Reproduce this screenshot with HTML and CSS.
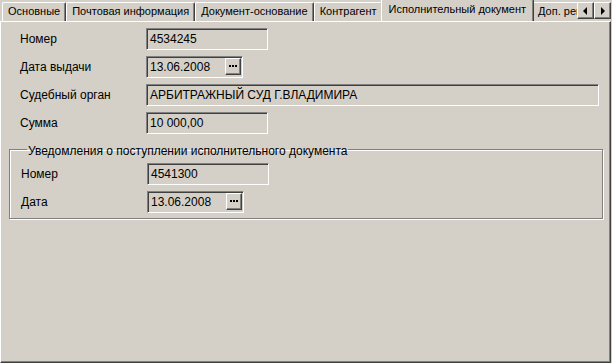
FILE: index.html
```html
<!DOCTYPE html>
<html lang="ru">
<head>
    <meta charset="UTF-8">
    <title>Исполнительный документ</title>
    <link rel="stylesheet" href="styles.css">
</head>
<body>
    <div class="window">
        <div class="tab-strip">
            <div class="tabs">
                <div class="tab">Основные</div>
                <div class="tab">Почтовая информация</div>
                <div class="tab">Документ-основание</div>
                <div class="tab">Контрагент</div>
                <div class="tab active">Исполнительный документ</div>
                <div class="tab">Доп. реквизиты</div>
            </div>
            <div class="scroller">
                <div class="arrow-btn"><span class="tri left"></span></div>
                <div class="arrow-btn"><span class="tri right"></span></div>
            </div>
        </div>

        <div class="panel">
            <div class="form">
                <div class="label">Номер</div>
                <div class="field short">4534245</div>

                <div class="label">Дата выдачи</div>
                <div class="field date">13.06.2008<span class="dots-btn"><i></i><i></i><i></i></span></div>

                <div class="label">Судебный орган</div>
                <div class="field wide">АРБИТРАЖНЫЙ СУД Г.ВЛАДИМИРА</div>

                <div class="label">Сумма</div>
                <div class="field short">10 000,00</div>
            </div>

            <fieldset class="group">
                <legend>Уведомления о поступлении исполнительного документа</legend>
                <div class="form">
                    <div class="label">Номер</div>
                    <div class="field short">4541300</div>

                    <div class="label">Дата</div>
                    <div class="field date">13.06.2008<span class="dots-btn"><i></i><i></i><i></i></span></div>
                </div>
            </fieldset>
        </div>
    </div>
</body>
</html>
```

FILE: styles.css
```css
body {
    margin: 0;
    padding: 0;
    background-color: #d4d0c8;
    color: #000;
    font-family: "Liberation Sans", Arial, sans-serif;
    font-size: 12px;
    overflow: hidden;
}

.window {
    width: 611px;
    height: 363px;
    display: flex;
    flex-direction: column;
    background: #d4d0c8;
}

/* Tabs */
.tab-strip {
    display: flex;
    height: 21px;
    position: relative;
    z-index: 2;
}

.tabs {
    flex: 1;
    display: flex;
    align-items: flex-end;
    overflow: hidden;
    padding-left: 2px;
}

.tab {
    height: 18px;
    line-height: 17px;
    padding: 0 5px;
    font-size: 11px;
    border-top: 1px solid #fff;
    border-left: 1px solid #fff;
    border-right: 1px solid #404040;
    box-shadow: inset -1px 0 0 #808080;
    border-radius: 2px 2px 0 0;
    white-space: nowrap;
    background: #d4d0c8;
}

.tab.active {
    height: 22px;
    line-height: 19px;
    margin: 0 -2px -1px -2px;
    padding: 0 7px;
    position: relative;
    z-index: 3;
}

.scroller {
    display: flex;
    align-items: flex-start;
    padding-top: 2px;
}

.arrow-btn {
    width: 15px;
    height: 15px;
    border-top: 1px solid #fff;
    border-left: 1px solid #fff;
    border-right: 1px solid #404040;
    border-bottom: 1px solid #404040;
    box-shadow: inset -1px -1px 0 #808080;
    display: flex;
    align-items: center;
    justify-content: center;
    background: #d4d0c8;
}

.tri {
    width: 0;
    height: 0;
    border-top: 4px solid transparent;
    border-bottom: 4px solid transparent;
}

.tri.left {
    border-right: 4px solid #000;
    margin-right: 1px;
}

.tri.right {
    border-left: 4px solid #000;
    margin-left: 1px;
}

/* Page */
.panel {
    flex: 1;
    border-top: 1px solid #fff;
    border-left: 1px solid #fff;
    border-right: 1px solid #404040;
    border-bottom: 1px solid #404040;
    box-shadow: inset -1px -1px 0 #808080, inset 1px 0 0 #d4d0c8;
    padding: 6px 0 0 0;
}

.form {
    display: grid;
    grid-template-columns: 126px auto;
    grid-auto-rows: 22px;
    row-gap: 6px;
    padding-left: 19px;
    align-items: center;
}

.field {
    height: 22px;
    box-sizing: border-box;
    border-top: 1px solid #808080;
    border-left: 1px solid #808080;
    border-right: 1px solid #fff;
    border-bottom: 1px solid #fff;
    box-shadow: inset 1px 1px 0 #404040;
    padding: 2px 0 0 3px;
    line-height: 16px;
    white-space: nowrap;
    position: relative;
}

.field.short {
    width: 122px;
}

.field.date {
    width: 97px;
}

.field.wide {
    width: 453px;
}

.dots-btn {
    position: absolute;
    right: 1px;
    top: 1px;
    width: 16px;
    height: 17px;
    box-sizing: border-box;
    border-top: 1px solid #fff;
    border-left: 1px solid #fff;
    border-right: 1px solid #404040;
    border-bottom: 1px solid #404040;
    box-shadow: inset -1px -1px 0 #808080;
    background: #d4d0c8;
    display: flex;
    align-items: center;
    justify-content: center;
    gap: 1px;
    padding-bottom: 1px;
}

.dots-btn i {
    width: 2px;
    height: 2px;
    background: #000;
}

/* Group box */
.group {
    margin: 7px 7px 0 8px;
    padding: 0 0 5px 11px;
    border: 1px solid #808080;
    box-shadow: 1px 1px 0 #fff, inset 1px 1px 0 #fff;
}

.group legend {
    padding: 4px 1px 0 1px;
    margin-left: 6px;
    line-height: 12px;
}

.group .form {
    padding-left: 0;
    padding-top: 6px;
}
```
